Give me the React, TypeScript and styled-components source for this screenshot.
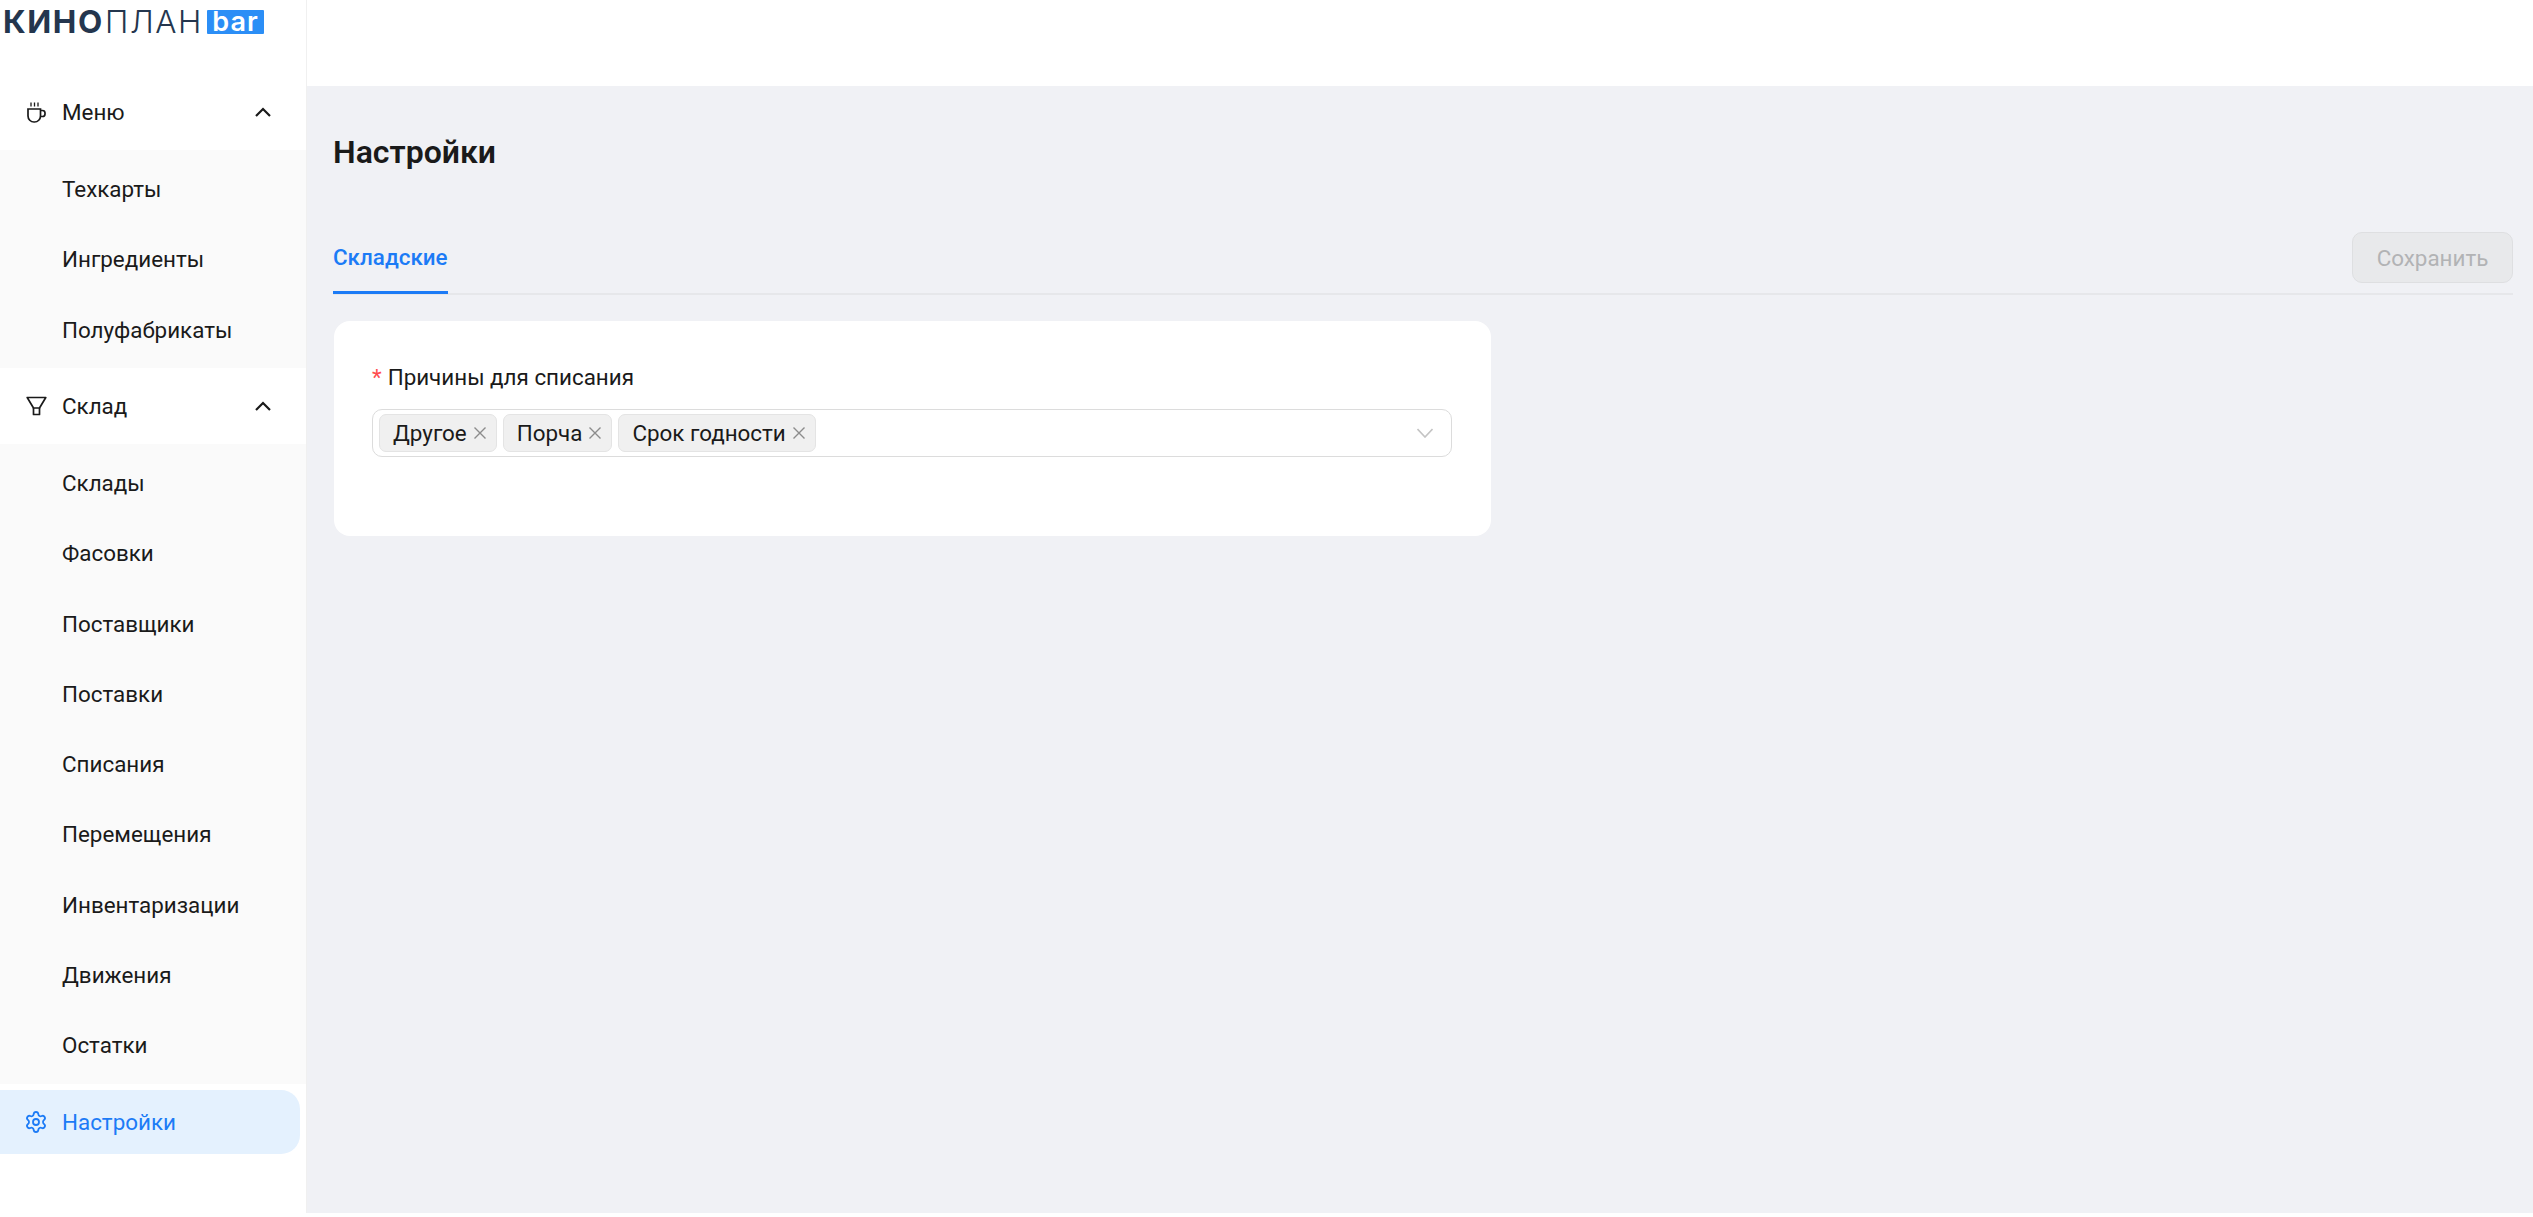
import React from "react";
import styled, { createGlobalStyle } from "styled-components";
import { Settings } from "lucide-react";

const Global = createGlobalStyle`
  html, body { margin: 0; padding: 0; background: #fff; }
  body { font-family: Roboto, "Liberation Sans", sans-serif; color: #1a1a1a; }
  * { box-sizing: border-box; }
`;

const Page = styled.div`
  display: flex;
  width: 2533px;
  height: 1213px;
  overflow: hidden;
`;

const Sidebar = styled.aside`
  width: 307px;
  flex: none;
  background: #fff;
  border-right: 1px solid #f0f0f0;
  display: flex;
  flex-direction: column;
  gap: 5.7px;
`;

const LogoBar = styled.div`
  height: 74.3px;
  padding: 5px 0 0 3px;
  display: flex;
  align-items: flex-start;
  gap: 4px;
`;

const LogoText = styled.div`
  display: flex;
  width: 200px;
  justify-content: space-between;
  font-family: Inter, sans-serif;
  font-size: 31.5px;
  line-height: 34px;
  color: #24364e;
  font-weight: 300;
  white-space: nowrap;
`;

const LogoBold = styled.span`
  font-weight: 700;
  letter-spacing: 1.6px;
`;

const LogoLight = styled.span`
  letter-spacing: 1.6px;
`;

const LogoBadge = styled.div`
  width: 57px;
  height: 24px;
  margin-top: 5px;
  background: #2b8ef6;
  border-radius: 1px;
  color: #fff;
  font-family: Inter, sans-serif;
  font-weight: 600;
  font-size: 27px;
  line-height: 23px;
  letter-spacing: 1px;
  text-align: center;
`;

const Row = styled.div<{ $active?: boolean }>`
  height: 64.6px;
  padding: 0 35px 0 24px;
  display: flex;
  align-items: center;
  font-size: 22.4px;
  color: ${(p) => (p.$active ? "#1c7bf6" : "#1a1a1a")};
  background: ${(p) => (p.$active ? "#e4f1fe" : "transparent")};
  border-radius: ${(p) => (p.$active ? "0 19px 19px 0" : "0")};
  margin-right: ${(p) => (p.$active ? "6px" : "0")};
`;

const RowIcon = styled.span`
  width: 24px;
  height: 24px;
  margin-right: 14px;
  flex: none;
  display: flex;
  align-items: center;
  justify-content: center;
`;

const RowLabel = styled.span`
  flex: 1;
`;

const SubMenu = styled.div`
  background: #fafafa;
  padding: 6.45px 0;
  display: flex;
  flex-direction: column;
  gap: 5.7px;
`;

const SubItem = styled.div`
  height: 64.6px;
  padding-left: 62px;
  display: flex;
  align-items: center;
  font-size: 22.4px;
  color: #1a1a1a;
`;

const Main = styled.main`
  flex: 1;
  display: flex;
  flex-direction: column;
  min-width: 0;
  background: #f0f1f5;
`;

const TopBar = styled.header`
  height: 86px;
  flex: none;
  background: #fff;
`;

const Content = styled.div`
  padding: 0 20px 0 26px;
`;

const Title = styled.h1`
  margin: 0;
  padding-top: 45px;
  height: 125px;
  font-size: 32px;
  line-height: 42px;
  font-weight: 600;
  color: #1a1a1a;
`;

const TabBar = styled.div`
  height: 84px;
  display: flex;
  align-items: flex-start;
  justify-content: space-between;
  border-bottom: 2px solid #e6e7ea;
`;

const Tab = styled.div`
  height: 83px;
  line-height: 92px;
  font-size: 22.4px;
  font-weight: 500;
  color: #1c7bf6;
  border-bottom: 3px solid #1c7bf6;
`;

const SaveButton = styled.button`
  width: 161px;
  height: 51px;
  margin-top: 21px;
  font: inherit;
  font-size: 22.4px;
  color: #b2b3b5;
  background: #e8e9eb;
  border: 1.5px solid #dedfe1;
  border-radius: 10px;
`;

const Card = styled.section`
  width: 1157px;
  height: 215px;
  margin: 26px 0 0 1px;
  padding: 39px 39px 0 38px;
  background: #fff;
  border-radius: 16px;
`;

const FieldLabel = styled.label`
  display: block;
  height: 34px;
  font-size: 22.4px;
  line-height: 34px;
  color: #1a1a1a;
  margin-bottom: 15px;
`;

const Required = styled.span`
  color: #ff4d4f;
  margin-right: 6px;
`;

const Select = styled.div`
  height: 48px;
  padding: 0 18px 0 6px;
  display: flex;
  align-items: center;
  gap: 6px;
  border: 1.5px solid #dcdcdc;
  border-radius: 10px;
`;

const Tag = styled.span`
  height: 38px;
  padding: 0 9px 1px 13px;
  display: flex;
  align-items: center;
  gap: 6px;
  font-size: 22.4px;
  line-height: 34px;
  color: #1a1a1a;
  background: #f0f0f0;
  border: 1.5px solid #e4e4e4;
  border-radius: 7px;
`;

const Spacer = styled.span`
  flex: 1;
`;

const CloseIcon = () => (
  <svg width="14" height="14" viewBox="0 0 14 14" fill="none" stroke="#8c8c8c" strokeWidth="1.4">
    <path d="M1.500 1.500l11 11M12.500 1.500l-11 11" />
  </svg>
);

const Chevron = ({ up }: { up?: boolean }) =>
  up ? (
    <svg width="16" height="10" viewBox="0 0 16 10" fill="none" stroke="#1a1a1a" strokeWidth="2.2">
      <path d="M1 9l7-7 7 7" />
    </svg>
  ) : (
    <svg width="16" height="10" viewBox="0 0 16 10" fill="none" stroke="#c4c4c4" strokeWidth="1.6">
      <path d="M0.500 1l7.500 8 7.500-8" />
    </svg>
  );

const CupIcon = () => (
  <svg width="19" height="21" viewBox="0 0 19 21" fill="none" stroke="#1a1a1a" strokeWidth="1.7">
    <path d="M4 0.500v4M7.500 0.500v4M11 0.500v4" strokeWidth="1.3" />
    <path d="M1 7h12.500v7a6 6 0 0 1-6 6h-.5a6 6 0 0 1-6-6z" />
    <path d="M13.500 8.500h2a2.500 2.500 0 0 1 2.500 2.500v1a2.500 2.500 0 0 1-2.500 2.500h-2" />
  </svg>
);

const FilterIcon = () => (
  <svg width="21" height="20" viewBox="0 0 21 20" fill="none" stroke="#1a1a1a" strokeWidth="1.7" strokeLinejoin="round">
    <path d="M1.200 1.500h18.600l-6.300 10.500h-6z" />
    <path d="M7.500 12v6.500h6v-6.500" />
  </svg>
);

const general = ["Техкарты", "Ингредиенты", "Полуфабрикаты"];
const stock = ["Склады", "Фасовки", "Поставщики", "Поставки", "Списания", "Перемещения", "Инвентаризации", "Движения", "Остатки"];
const reasons = ["Другое", "Порча", "Срок годности"];

export default function App() {
  return (
    <>
      <Global />
      <Page>
        <Sidebar>
          <LogoBar>
            <LogoText>
              <LogoBold>КИНО</LogoBold>
              <LogoLight>ПЛАН</LogoLight>
            </LogoText>
            <LogoBadge>bar</LogoBadge>
          </LogoBar>
          <Row>
            <RowIcon><CupIcon /></RowIcon>
            <RowLabel>Меню</RowLabel>
            <Chevron up />
          </Row>
          <SubMenu>
            {general.map((t) => <SubItem key={t}>{t}</SubItem>)}
          </SubMenu>
          <Row>
            <RowIcon><FilterIcon /></RowIcon>
            <RowLabel>Склад</RowLabel>
            <Chevron up />
          </Row>
          <SubMenu>
            {stock.map((t) => <SubItem key={t}>{t}</SubItem>)}
          </SubMenu>
          <Row $active>
            <RowIcon><Settings size={24} strokeWidth={1.8} /></RowIcon>
            <RowLabel>Настройки</RowLabel>
          </Row>
        </Sidebar>
        <Main>
          <TopBar />
          <Content>
            <Title>Настройки</Title>
            <TabBar>
              <Tab>Складские</Tab>
              <SaveButton disabled>Сохранить</SaveButton>
            </TabBar>
            <Card>
              <FieldLabel><Required>*</Required>Причины для списания</FieldLabel>
              <Select>
                {reasons.map((r) => (
                  <Tag key={r}>{r}<CloseIcon /></Tag>
                ))}
                <Spacer />
                <Chevron />
              </Select>
            </Card>
          </Content>
        </Main>
      </Page>
    </>
  );
}
